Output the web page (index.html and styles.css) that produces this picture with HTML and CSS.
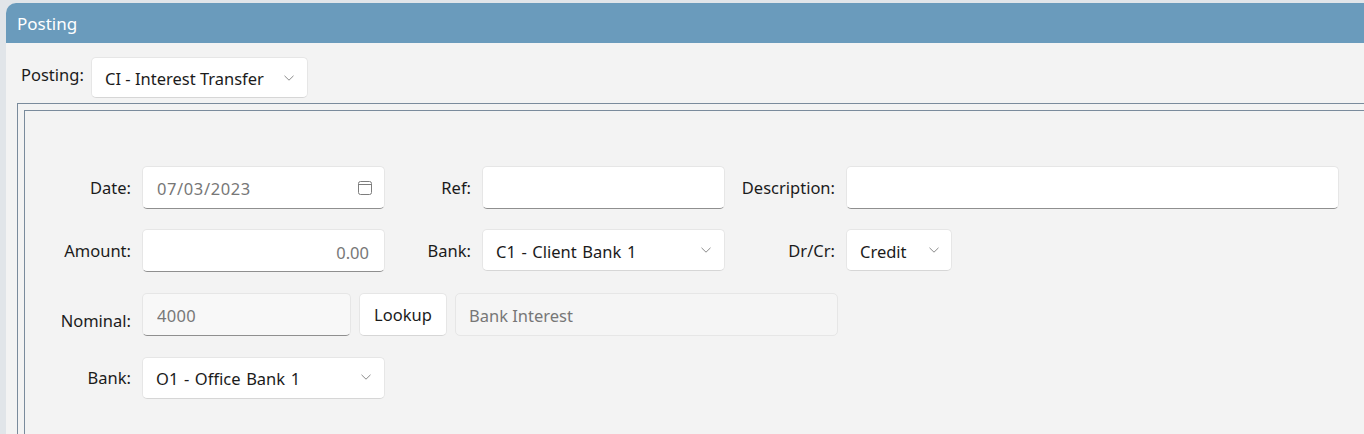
FILE: index.html
```html
<!DOCTYPE html>
<html lang="en">
<head>
  <meta charset="UTF-8">
  <title>Posting</title>
  <link rel="stylesheet" href="styles.css">
</head>
<body>
  <div class="panel">
    <div class="panel-title">Posting</div>
    <div class="panel-body">
      <div class="type-row">
        <label class="type-label">Posting:</label>
        <div class="select type-select">
          <span>CI - Interest Transfer</span>
          <svg class="chevron" viewBox="0 0 10 6"><path d="M.5.8 5 5.2 9.5.8"/></svg>
        </div>
      </div>
      <div class="frame-outer">
        <div class="frame-inner">
          <div class="form">
            <label class="lbl">Date:</label>
            <div class="input date-input">
              <span class="muted">07/03/2023</span>
              <svg class="cal" viewBox="0 0 14 14"><rect x=".5" y=".5" width="13" height="13" rx="2"/><path d="M.5 3.5h13"/></svg>
            </div>
            <label class="lbl">Ref:</label>
            <input class="input" type="text">
            <label class="lbl">Description:</label>
            <input class="input" type="text">

            <label class="lbl">Amount:</label>
            <input class="input amount" type="text" value="0.00">
            <label class="lbl">Bank:</label>
            <div class="select bank-select">
              <span>C1 - Client Bank 1</span>
              <svg class="chevron" viewBox="0 0 10 6"><path d="M.5.8 5 5.2 9.5.8"/></svg>
            </div>
            <label class="lbl">Dr/Cr:</label>
            <div class="select drcr">
              <span>Credit</span>
              <svg class="chevron" viewBox="0 0 10 6"><path d="M.5.8 5 5.2 9.5.8"/></svg>
            </div>

            <label class="lbl lbl-low">Nominal:</label>
            <div class="nominal-row">
              <input class="input nominal" type="text" value="4000" disabled>
              <button class="btn" type="button">Lookup</button>
              <input class="input nominal-name" type="text" value="Bank Interest" disabled>
            </div>

            <label class="lbl lbl-last">Bank:</label>
            <div class="select bank-select office-select">
              <span>O1 - Office Bank 1</span>
              <svg class="chevron" viewBox="0 0 10 6"><path d="M.5.8 5 5.2 9.5.8"/></svg>
            </div>
          </div>
        </div>
      </div>
    </div>
  </div>
</body>
</html>
```

FILE: styles.css
```css
html, body { height: 100%; }
body { margin: 0; padding: 3px 0 0 6px; box-sizing: border-box; overflow: hidden; background: #e1e5e9; color: #1b1b1b; font-family: "Noto Sans", "Open Sans", sans-serif; font-size: 16.5px; }

/* panel */
.panel { height: 100%; background: #f3f3f3; border-radius: 10px 0 0 0; overflow: hidden; }
.panel-title { height: 40px; padding-left: 11px; line-height: 41px; background: #6a9bbc; color: #fff; font-size: 17px; }
.panel-body { padding: 14px 0 0 11px; }

.type-row { display: flex; align-items: flex-start; }
.type-label { width: 70px; margin-left: 4px; line-height: 36px; }
.type-row .type-select { width: 217px; height: 41px; }

/* double border, runs off the right and the bottom of the window */
.frame-outer { margin: 5px -30px 0 0; padding: 6px; height: 400px; border: 1px solid #7a8b9c; }
.frame-inner { height: 100%; padding-top: 55px; border: 1px solid #7a8b9c; }

.form { display: grid; grid-template-columns: 106px 243px 75px 243px 99px 493px; grid-template-rows: 43px 44px 44px 42px; gap: 20px 11px; }
.lbl { text-align: right; line-height: 43px; white-space: nowrap; }
.lbl-low { line-height: 55px; }
.lbl-last { line-height: 41px; }

/* fields */
.input, .select, .btn { display: flex; align-items: center; box-sizing: border-box; margin: 0; border: 1px solid #e6e6e6; border-radius: 5px; background: #fff; color: #1b1b1b; font-family: inherit; font-size: inherit; }
.input { width: 100%; height: 43px; padding: 2px 15px 0 14px; border-bottom: 1px solid #8f8f8f; outline: none; }
.select { height: 42px; justify-content: space-between; padding: 2px 13px 0; border-bottom-color: #d6d6d6; }
.bank-select { word-spacing: 1.3px; }
.office-select { padding-top: 0; }
.drcr { width: 106px; padding-right: 12px; }

.muted { color: #777; letter-spacing: .6px; }
.date-input { justify-content: space-between; padding-right: 12px; }
.amount { padding-top: 4px; text-align: right; color: #777; }
.nominal-row { display: flex; grid-column: 2 / -1; height: 43px; gap: 8px; }
.nominal { width: 209px; background: #f8f8f8; color: #777; letter-spacing: .3px; }
.nominal-name { width: 383px; padding-left: 13px; background: #f5f5f5; border-bottom-color: #e6e6e6; color: #777; }
.btn { width: 88px; height: 43px; justify-content: center; padding: 0; border-bottom-color: #d6d6d6; }

/* icons */
.chevron { width: 10px; height: 6px; margin-top: -2px; fill: none; stroke: #8a8a8a; stroke-width: 1; }
.cal { width: 14px; height: 14px; margin-top: -2px; fill: none; stroke: #7d7d7d; stroke-width: 1; }
```
